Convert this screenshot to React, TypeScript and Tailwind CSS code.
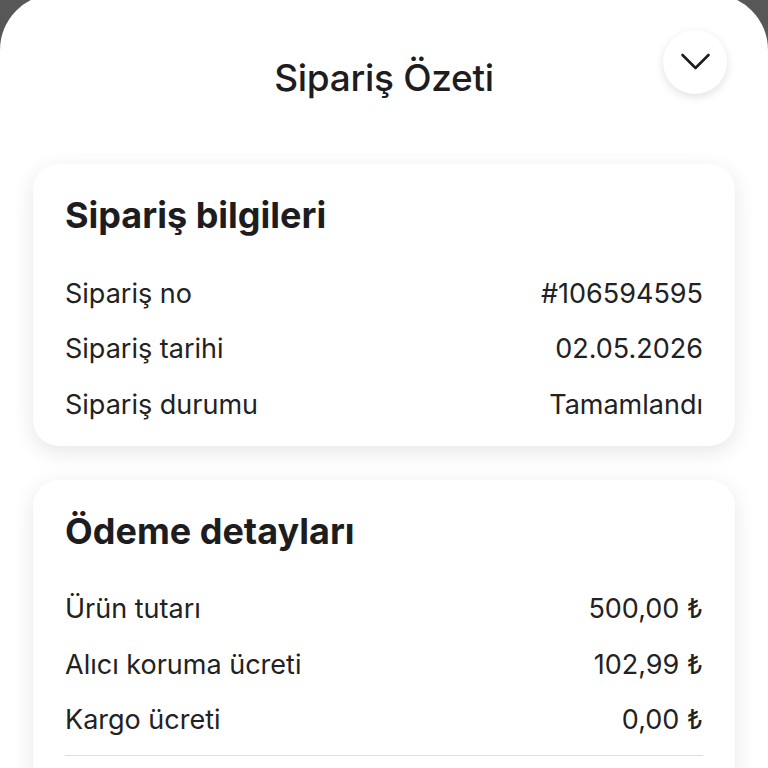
const orderInfo = [
  { label: "Sipariş no", value: "#106594595" },
  { label: "Sipariş tarihi", value: "02.05.2026" },
  { label: "Sipariş durumu", value: "Tamamlandı" },
]

const paymentDetails = [
  { label: "Ürün tutarı", value: "500,00 ₺" },
  { label: "Alıcı koruma ücreti", value: "102,99 ₺" },
  { label: "Kargo ücreti", value: "0,00 ₺" },
]

type Row = { label: string; value: string }

function InfoCard({ title, rows, children }: { title: string; rows: Row[]; children?: React.ReactNode }) {
  return (
    <section className="rounded-[26px] bg-white px-8 pt-[29px] pb-[13px] shadow-[0_6px_22px_rgba(0,0,0,0.10)]">
      <h2 className="text-[36px] leading-[44px] font-bold text-[#1d1d1f]">{title}</h2>

      <div className="mt-[29px]">
        {rows.map(row => (
          <div key={row.label} className="flex h-[55.5px] items-center justify-between text-[27px] text-[#222]">
            <span>{row.label}</span>
            <span>{row.value}</span>
          </div>
        ))}
      </div>

      {children}
    </section>
  )
}

export default function App() {
  return (
    <div className="min-h-screen bg-[#575757] font-['Inter',sans-serif]">
      <div className="-mt-[6px] min-h-screen rounded-t-[56px] bg-white px-[33px] pb-10">
        <header className="grid grid-cols-[1fr_auto_1fr] items-start pt-[36px]">
          <div />
          <h1 className="mt-[26px] text-[37px] leading-[44px] font-medium tracking-[-0.3px] text-[#1d1d1f]">Sipariş Özeti</h1>
          <div className="flex justify-end pr-2">
            <button
              type="button"
              className="flex h-16 w-16 items-center justify-center rounded-full bg-white shadow-[0_3px_10px_rgba(0,0,0,0.12)]"
            >
              <svg width="64" height="64" viewBox="0 0 64 64" fill="none">
                <polyline points="19.5,25 32.5,38 45.5,25" stroke="#1d1d1f" strokeWidth="2.6" strokeLinecap="round" strokeLinejoin="round" />
              </svg>
            </button>
          </div>
        </header>

        <div className="mt-[64px] space-y-[34px]">
          <InfoCard title="Sipariş bilgileri" rows={orderInfo} />

          <InfoCard title="Ödeme detayları" rows={paymentDetails}>
            <div className="mt-[7px] mb-16 border-t border-[#dedede]" />
          </InfoCard>
        </div>
      </div>
    </div>
  )
}
